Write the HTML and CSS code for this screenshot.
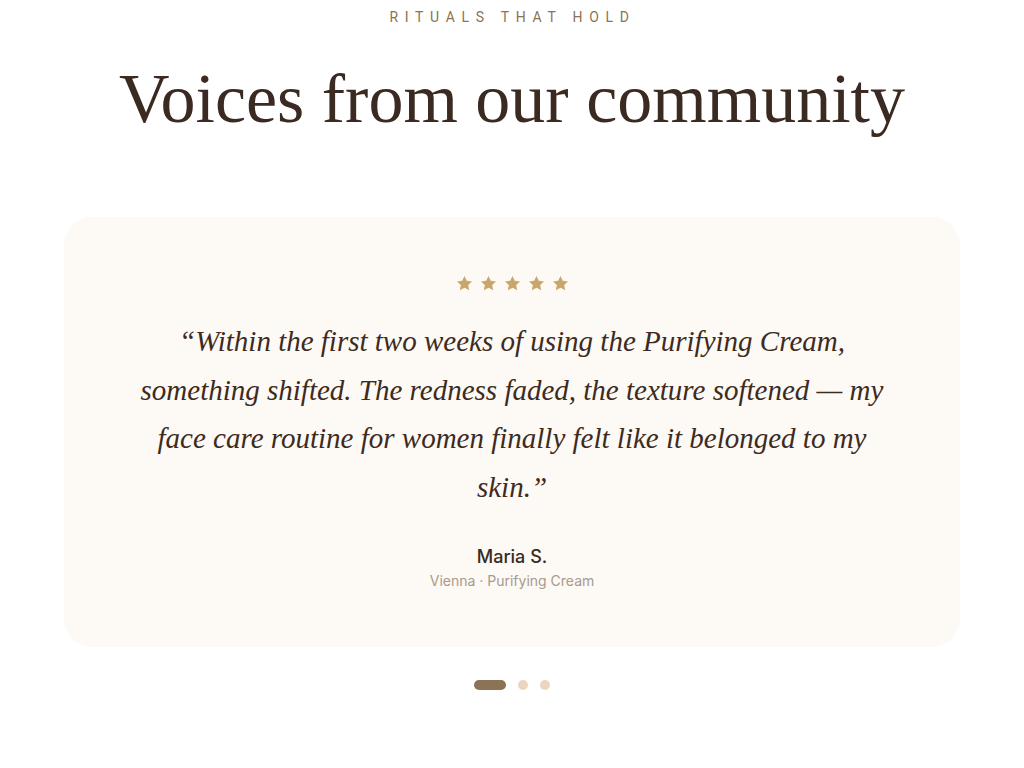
FILE: index.html
```html
<!DOCTYPE html>
<html lang="en">
<head>
<meta charset="utf-8">
<title>Voices from our community</title>
<link rel="stylesheet" href="styles.css">
</head>
<body>
<section class="testimonials">
  <p class="eyebrow">Rituals that hold</p>
  <h2 class="title">Voices from our community</h2>
  <div class="card">
    <div class="stars" aria-label="5 stars">
      <svg viewBox="0 0 24 24"><path d="M12 2.5l2.9 6.1 6.6.8-4.9 4.6 1.3 6.6L12 17.3l-5.9 3.3 1.3-6.6L2.5 9.4l6.6-.8z"/></svg>
      <svg viewBox="0 0 24 24"><path d="M12 2.5l2.9 6.1 6.6.8-4.9 4.6 1.3 6.6L12 17.3l-5.9 3.3 1.3-6.6L2.5 9.4l6.6-.8z"/></svg>
      <svg viewBox="0 0 24 24"><path d="M12 2.5l2.9 6.1 6.6.8-4.9 4.6 1.3 6.6L12 17.3l-5.9 3.3 1.3-6.6L2.5 9.4l6.6-.8z"/></svg>
      <svg viewBox="0 0 24 24"><path d="M12 2.5l2.9 6.1 6.6.8-4.9 4.6 1.3 6.6L12 17.3l-5.9 3.3 1.3-6.6L2.5 9.4l6.6-.8z"/></svg>
      <svg viewBox="0 0 24 24"><path d="M12 2.5l2.9 6.1 6.6.8-4.9 4.6 1.3 6.6L12 17.3l-5.9 3.3 1.3-6.6L2.5 9.4l6.6-.8z"/></svg>
    </div>
    <blockquote class="quote">“Within the first two weeks of using the Purifying Cream, something shifted. The redness faded, the texture softened — my face care routine for women finally felt like it belonged to my skin.”</blockquote>
    <p class="name">Maria S.</p>
    <p class="meta">Vienna · Purifying Cream</p>
  </div>
  <div class="dots">
    <span class="dot active"></span>
    <span class="dot"></span>
    <span class="dot"></span>
  </div>
</section>
</body>
</html>
```
FILE: styles.css
```css
* { box-sizing: border-box; }
html, body { margin: 0; padding: 0; background: #ffffff; }
body { font-family: Inter, Roboto, "Liberation Sans", sans-serif; color: #3b2a20; }

.testimonials {
  display: flex;
  flex-direction: column;
  align-items: center;
  padding: 8px 64px 0;
}

.eyebrow {
  margin: 0;
  font-family: Roboto, sans-serif;
  font-size: 14px;
  line-height: 18px;
  letter-spacing: 6.7px;
  text-transform: uppercase;
  color: #8b7355;
  padding-left: 1px;
}

.title {
  margin: 33px 0 0;
  font-family: "Liberation Serif", serif;
  font-weight: 400;
  font-size: 70px;
  line-height: 80px;
  color: #3b2a22;
}

.card {
  width: 896px;
  margin-top: 78px;
  background: #fdf9f4;
  border-radius: 28px;
  padding: 57px 72px 57px;
  display: flex;
  flex-direction: column;
  align-items: center;
}

.stars {
  display: flex;
  gap: 5px;
  height: 19px;
}
.stars svg { width: 19px; height: 19px; fill: #c9a66b; }

.quote {
  margin: 24px 0 0;
  font-family: "Liberation Serif", serif;
  font-style: italic;
  font-size: 29px;
  line-height: 48.7px;
  text-align: center;
  color: #3d2b22;
  max-width: 752px;
}

.name {
  margin: 34px 0 0;
  font-size: 18px;
  line-height: 22px;
  font-weight: 500;
  color: #3a2a20;
}

.meta {
  margin: 4px 0 0;
  font-size: 14px;
  line-height: 18px;
  color: #a89a8e;
}

.dots {
  display: flex;
  gap: 12px;
  margin-top: 33px;
}
.dot {
  width: 10px;
  height: 10px;
  border-radius: 5px;
  background: #ead6bf;
}
.dot.active { width: 32px; background: #8b7355; }
```
